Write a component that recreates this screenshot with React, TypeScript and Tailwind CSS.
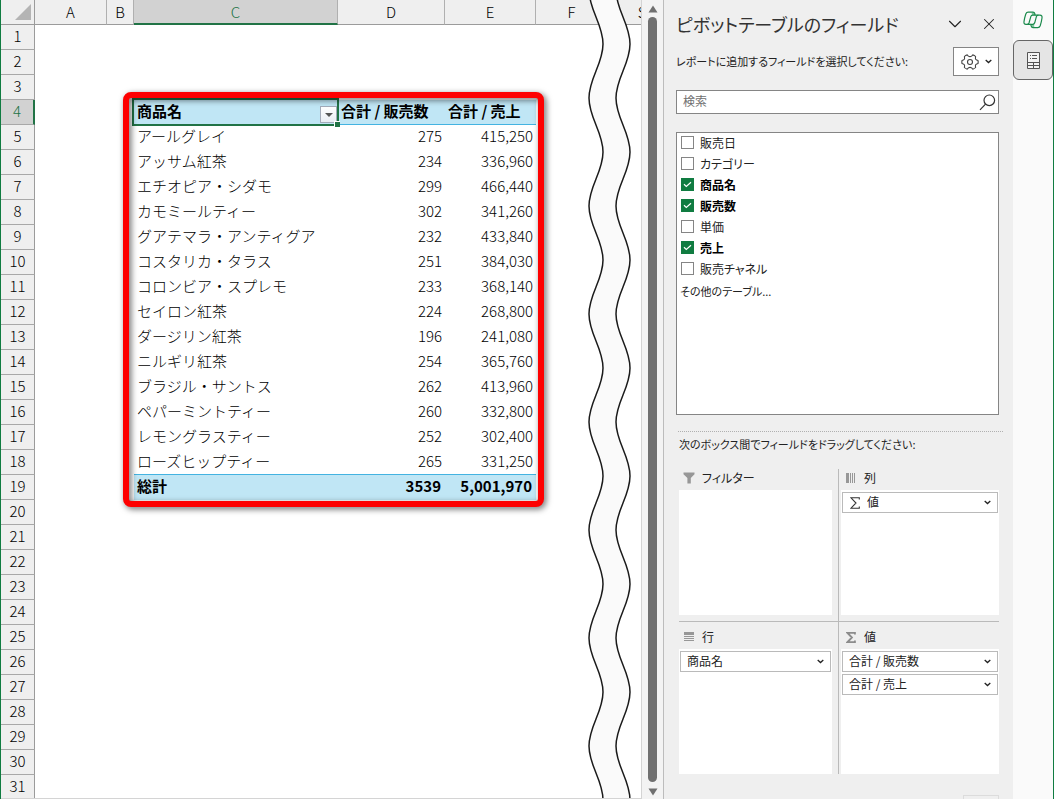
import React, { useState } from 'react';
import { ChevronDown, X } from 'lucide-react';

interface PivotRow {
    name: string;
    qty: string;
    sales: string;
}

const PIVOT_ROWS: PivotRow[] = [
    { name: 'アールグレイ', qty: '275', sales: '415,250' },
    { name: 'アッサム紅茶', qty: '234', sales: '336,960' },
    { name: 'エチオピア・シダモ', qty: '299', sales: '466,440' },
    { name: 'カモミールティー', qty: '302', sales: '341,260' },
    { name: 'グアテマラ・アンティグア', qty: '232', sales: '433,840' },
    { name: 'コスタリカ・タラス', qty: '251', sales: '384,030' },
    { name: 'コロンビア・スプレモ', qty: '233', sales: '368,140' },
    { name: 'セイロン紅茶', qty: '224', sales: '268,800' },
    { name: 'ダージリン紅茶', qty: '196', sales: '241,080' },
    { name: 'ニルギリ紅茶', qty: '254', sales: '365,760' },
    { name: 'ブラジル・サントス', qty: '262', sales: '413,960' },
    { name: 'ペパーミントティー', qty: '260', sales: '332,800' },
    { name: 'レモングラスティー', qty: '252', sales: '302,400' },
    { name: 'ローズヒップティー', qty: '265', sales: '331,250' },
];

const HEADER_ROW = 4;
const TOTAL_ROW = HEADER_ROW + PIVOT_ROWS.length + 1;
const ROW_NUMBERS = Array.from({ length: 31 }, (_, i) => i + 1);
const COLUMNS = ['A', 'B', 'C', 'D', 'E', 'F', 'S'];

const INITIAL_FIELDS = [
    { name: '販売日', checked: false },
    { name: 'カテゴリー', checked: false },
    { name: '商品名', checked: true },
    { name: '販売数', checked: true },
    { name: '単価', checked: false },
    { name: '売上', checked: true },
    { name: '販売チャネル', checked: false },
];

/* ---------- Icons ---------- */

const SmallChevron: React.FC<{ className?: string }> = ({ className }) => (
    <svg viewBox="0 0 7 5" className={`h-[5px] w-[7px] ${className ?? ''}`} fill="none" stroke="#222" strokeWidth="1.3">
        <path d="M0.7 0.9 L3.5 3.5 L6.3 0.9" />
    </svg>
);

const GearIcon = () => (
    <svg viewBox="0 0 18 18" className="h-[18px] w-[18px]" fill="none" stroke="#444" strokeWidth="1.1" strokeLinejoin="round">
        <path d="M6.2 1.9 Q4.5 2.3 3.4 3.5 L3.6 5.5 Q3.4 6.6 2.4 6.9 L1 7.5 Q0.6 9 1 10.5 L2.4 11.1 Q3.4 11.5 3.6 12.5 L3.4 14.5 Q4.5 15.7 6.2 16.1 L7.4 14.9 Q9 13.8 10.6 14.9 L11.8 16.1 Q13.5 15.7 14.6 14.5 L14.4 12.5 Q14.6 11.5 15.6 11.1 L17 10.5 Q17.4 9 17 7.5 L15.6 6.9 Q14.6 6.6 14.4 5.5 L14.6 3.5 Q13.5 2.3 11.8 1.9 L10.6 3.1 Q9 4.2 7.4 3.1 Z" />
        <circle cx="9" cy="9" r="2.5" />
    </svg>
);

const SearchIcon = () => (
    <svg viewBox="0 0 17 17" className="h-[17px] w-[17px]" fill="none" stroke="#333" strokeWidth="1.2">
        <circle cx="10.3" cy="6.3" r="5.3" />
        <path d="M6.5 10.2 L1 15.8" />
    </svg>
);

const FunnelIcon = () => (
    <svg viewBox="0 0 12 12" className="h-3 w-3" fill="#979797">
        <path d="M0.5 0.5 H11.5 V2.2 L7.8 6 V11.5 H4.4 V6 L0.5 2.2 Z" />
    </svg>
);

const ColumnsIcon = () => (
    <svg viewBox="0 0 10 10" className="h-[10px] w-[10px]" fill="#979797">
        <path d="M0 0h3v10h-3z M4 0h1v10h-1z M6 0h1v10h-1z M8 0h1v10h-1z" />
    </svg>
);

const RowsIcon = () => (
    <svg viewBox="0 0 10 10" className="h-[10px] w-[10px]" fill="#979797">
        <path d="M0 0h10v3h-10z M0 4h10v1h-10z M0 6h10v1h-10z M0 8h10v1h-10z" />
    </svg>
);

const SigmaIcon: React.FC<{ bold?: boolean }> = ({ bold }) => (
    <svg
        viewBox="0 0 10 12"
        className={bold ? 'h-[11px] w-[10px]' : 'h-3 w-[10px]'}
        fill="none"
        stroke={bold ? '#8c8c8c' : '#333'}
        strokeWidth={bold ? 2 : 1.1}
    >
        <path d="M9.3 2.6 V0.8 H1 L6 6 L1 11.2 H9.3 V9.4" />
    </svg>
);

const CopilotIcon = () => (
    <svg viewBox="0 0 20 18" className="h-[18px] w-5" fill="none" stroke="#1b8a4c" strokeWidth="1.2" strokeLinejoin="round">
        <path d="M8.6 1.6 H11 L12.2 4.2 H9 Z M8 13.3 H11 L11.4 16.4 H9.2 Z" fill="#7fc79d" stroke="none" />
        <path d="M5.2 1.2 H10 Q11.4 1.2 11.8 2.6 L12.2 4.2 H9.6 Q8.2 4.2 7.8 5.6 L6 12 Q5.6 13.3 4.2 13.3 H3 Q0.6 13.3 1 10.6 Q1.6 6.6 2.8 3 Q3.5 1.2 5.2 1.2 Z" />
        <path d="M14.8 16.6 H10 Q8.6 16.6 8.2 15.2 L7.7 13.3 H9.8 Q11.2 13.3 11.7 11.8 L13.4 5.6 Q13.8 4.2 15.4 4.2 H17 Q19.4 4.2 19 7 Q18.4 11.2 17.2 14.8 Q16.5 16.6 14.8 16.6 Z" />
        <path d="M12.2 4.2 H15.4 M4.2 13.3 H7.7" />
    </svg>
);

const FieldListIcon = () => (
    <svg viewBox="0 0 13 17" className="h-[17px] w-[13px]" fill="none" stroke="#555" strokeWidth="1">
        <path d="M0.5 0.5 H12.5 V16.5 H0.5 Z" fill="#f4f4f4" />
        <path d="M3 3.5 H4 M5 3.5 H10 M3 6.5 H4 M5 6.5 H10" />
        <path d="M0.5 10.5 H12.5 M0.5 13.5 H12.5 M6.5 10.5 V16.5" />
    </svg>
);

/* ---------- Worksheet ---------- */

const PivotCells: React.FC<{ row: number }> = ({ row }) => {
    if (row === HEADER_ROW) {
        return (
            <>
                <td className="relative border-b border-[#44b3e1] bg-[#c0e6f5] pl-[3px] align-top font-bold">
                    <div className="flex items-start justify-between">
                        商品名
                        <button
                            aria-label="商品名のフィルター"
                            className="mt-[6px] mr-px flex h-[17px] w-[17px] items-center justify-center border border-[#a3abb9] bg-linear-to-b from-white to-[#e9edf4]"
                        >
                            <svg viewBox="0 0 8 4" className="h-1 w-2" fill="#555">
                                <path d="M0 0 H8 L4 4 Z" />
                            </svg>
                        </button>
                    </div>
                    <div className="pointer-events-none absolute -inset-y-0.5 -right-px -left-0.5 border-2 border-[#217346]" />
                    <div className="absolute -right-0.5 -bottom-[3px] h-[6px] w-[6px] border-t border-l border-white bg-[#217346]" />
                </td>
                <td className="border-b border-[#44b3e1] bg-[#c0e6f5] pl-[3px] align-top font-bold">合計 / 販売数</td>
                <td className="border-b border-[#44b3e1] bg-[#c0e6f5] pl-[3px] align-top font-bold">合計 / 売上</td>
            </>
        );
    }
    if (row === TOTAL_ROW) {
        return (
            <>
                <td className="bg-[#c0e6f5] pl-[3px] align-top font-bold">総計</td>
                <td className="bg-[#c0e6f5] pr-1 text-right align-top font-bold">3539</td>
                <td className="bg-[#c0e6f5] pr-1 text-right align-top font-bold">5,001,970</td>
            </>
        );
    }
    const data = PIVOT_ROWS[row - HEADER_ROW - 1];
    if (!data) {
        return (
            <>
                <td />
                <td />
                <td />
            </>
        );
    }
    const line = row === TOTAL_ROW - 1 ? 'border-b border-[#44b3e1]' : '';
    return (
        <>
            <td className={`pl-[3px] align-top ${line}`}>{data.name}</td>
            <td className={`pr-[3px] text-right align-top ${line}`}>{data.qty}</td>
            <td className={`pr-[3px] text-right align-top ${line}`}>{data.sales}</td>
        </>
    );
};

const Worksheet = () => (
    <div className="relative min-w-0 flex-1 overflow-hidden border-r border-b border-[#d4d4d4] bg-white">
        <table className="w-[676px] table-fixed border-separate border-spacing-0 text-[15px] leading-[22px] font-light text-black">
            <colgroup>
                <col className="w-[34px]" />
                <col className="w-[72px]" />
                <col className="w-[27px]" />
                <col className="w-[204px]" />
                <col className="w-[107px]" />
                <col className="w-[91px]" />
                <col className="w-[72px]" />
                <col className="w-[69px]" />
            </colgroup>
            <thead>
                <tr className="h-[25px]">
                    <th className="border-r border-b border-[#9b9b9b] bg-[#efefef] p-0">
                        <svg viewBox="0 0 16 16" className="ml-auto mr-[3px] h-4 w-4" fill="#b4b4b4">
                            <path d="M16 0 V16 H0 Z" />
                        </svg>
                    </th>
                    {COLUMNS.map((col) => (
                        <th
                            key={col}
                            className={`border-r p-0 font-light ${
                                col === 'C'
                                    ? 'border-b-2 border-r-[#b0b0b0] border-b-[#217346] bg-[#d2d2d2] text-[#217346]'
                                    : 'border-b border-r-[#b0b0b0] border-b-[#9b9b9b] bg-[#efefef]'
                            }`}
                        >
                            {col}
                        </th>
                    ))}
                </tr>
            </thead>
            <tbody>
                {ROW_NUMBERS.map((row) => (
                    <tr key={row} className="h-[25px]">
                        <th
                            className={`border-b border-b-[#a8a8a8] p-0 pb-0.5 font-light ${
                                row === HEADER_ROW
                                    ? 'border-r-2 border-r-[#217346] bg-[#d2d2d2] text-[#217346]'
                                    : 'border-r border-r-[#9b9b9b] bg-[#efefef]'
                            }`}
                        >
                            {row}
                        </th>
                        <td />
                        <td />
                        <PivotCells row={row} />
                        <td />
                        <td />
                    </tr>
                ))}
            </tbody>
        </table>

        {/* Red frame round the pivot table */}
        <div className="pointer-events-none absolute top-[92px] left-[122px] h-[415px] w-[421px] rounded-lg border-6 border-[#fe0000] drop-shadow-[2px_2px_3px_rgba(0,0,0,0.6)]" />

        {/* Torn strip that hides the columns between F and S */}
        <svg viewBox="0 0 44 864" className="pointer-events-none absolute -top-[10px] left-[587px] h-[864px] w-11">
            <defs>
                <pattern id="wave" width="44" height="108" patternUnits="userSpaceOnUse">
                    <path
                        d="M1 0 C1 20 15 34 15 54 C15 74 1 88 1 108 H28 C28 88 42 74 42 54 C42 34 28 20 28 0 Z"
                        fill="#fafafa"
                    />
                    <path
                        d="M1 0 C1 20 15 34 15 54 C15 74 1 88 1 108 M28 0 C28 20 42 34 42 54 C42 74 28 88 28 108"
                        fill="none"
                        stroke="#1a1a1a"
                        strokeWidth="1.5"
                    />
                </pattern>
            </defs>
            <rect width="44" height="864" fill="url(#wave)" />
        </svg>
    </div>
);

const VerticalScrollbar = () => (
    <div className="flex w-[21px] shrink-0 flex-col items-center gap-1 bg-[#f3f3f3] pt-[5px] pb-[3px]">
        <button aria-label="上へスクロール">
            <svg viewBox="0 0 10 8" className="h-2 w-[10px]" fill="#707070">
                <path d="M5 0.5 L9.5 7.5 H0.5 Z" />
            </svg>
        </button>
        <div className="w-[9px] flex-1 rounded-full bg-[#707070]" />
        <button aria-label="下へスクロール" className="mt-0.5">
            <svg viewBox="0 0 10 8" className="h-2 w-[10px]" fill="#707070">
                <path d="M5 7.5 L9.5 0.5 H0.5 Z" />
            </svg>
        </button>
    </div>
);

/* ---------- Field pane ---------- */

const FieldSelect: React.FC<{ label: string; sigma?: boolean }> = ({ label, sigma }) => (
    <div className="relative">
        {sigma && (
            <span className="pointer-events-none absolute inset-y-0 left-2 flex items-center">
                <SigmaIcon />
            </span>
        )}
        <select
            aria-label={label}
            className={`block h-[21px] w-full appearance-none border border-[#bababa] bg-white pb-px text-xs text-[#222] ${sigma ? 'pl-6' : 'pl-[6px]'}`}
        >
            <option>{label}</option>
        </select>
        <SmallChevron className="pointer-events-none absolute top-2 right-[7px]" />
    </div>
);

interface AreaProps {
    title: string;
    icon: React.ReactNode;
    children?: React.ReactNode;
}

const Area: React.FC<AreaProps> = ({ title, icon, children }) => (
    <section>
        <h3 className="flex h-[21px] items-center gap-[7px] pb-[3px] pl-1 text-xs">
            <span className="flex w-3 justify-center">{icon}</span>
            {title}
        </h3>
        <div className="flex h-[125px] flex-col gap-0.5 bg-white px-px pt-0.5">{children}</div>
    </section>
);

const FieldPane = () => {
    const [fields, setFields] = useState(INITIAL_FIELDS);

    const toggleField = (name: string) => {
        setFields(fields.map((f) => (f.name === name ? { ...f, checked: !f.checked } : f)));
    };

    return (
        <aside className="flex w-[350px] shrink-0 flex-col border-l border-[#bcbcbc] bg-[#efefef] pr-[14px] pl-3 text-xs text-[#222] [font-feature-settings:'palt']">
            <div className="flex h-[47px] items-center justify-between">
                <h2 className="text-lg text-[#333]">ピボットテーブルのフィールド</h2>
                <div className="flex items-center gap-[14px] pr-px">
                    <button aria-label="作業ウィンドウのオプション">
                        <ChevronDown size={22} strokeWidth={1.2} />
                    </button>
                    <button aria-label="閉じる">
                        <X size={18} strokeWidth={1.4} />
                    </button>
                </div>
            </div>

            <div className="flex items-center justify-between">
                <p className="text-[11px]">レポートに追加するフィールドを選択してください:</p>
                <button aria-label="ツール" className="flex h-[29px] w-[46px] items-center justify-center gap-[6px] border border-[#858585] bg-white">
                    <GearIcon />
                    <SmallChevron />
                </button>
            </div>

            <div className="mt-[14px] flex h-6 shrink-0 items-center border border-[#858585] bg-white pr-0.5 pl-[6px]">
                <input type="text" aria-label="検索" placeholder="検索" className="min-w-0 flex-1 pb-0.5 outline-none placeholder:text-[#707070]" />
                <button aria-label="検索を実行">
                    <SearchIcon />
                </button>
            </div>

            <div className="mt-[18px] min-h-0 flex-1 overflow-hidden border border-[#858585] bg-white">
                {fields.map((field) => (
                    <label
                        key={field.name}
                        className={`flex h-[21px] items-center gap-[6px] pb-0.5 pl-1 ${field.checked ? 'font-bold text-black' : ''}`}
                    >
                        <span className="relative flex">
                            <input
                                type="checkbox"
                                checked={field.checked}
                                onChange={() => toggleField(field.name)}
                                className="h-[13px] w-[13px] appearance-none border border-[#858585] bg-white checked:border-[#107c41] checked:bg-[#107c41]"
                            />
                            {field.checked && (
                                <svg viewBox="0 0 13 13" className="pointer-events-none absolute inset-0" fill="none" stroke="#fff" strokeWidth="1.2">
                                    <path d="M3 6.3 L5.3 8.5 L10 4.2" />
                                </svg>
                            )}
                        </span>
                        {field.name}
                    </label>
                ))}
                <a href="#tables" className="block pl-[3px] text-[11px] leading-[22px]">
                    その他のテーブル...
                </a>
            </div>

            <div className="mt-4 -mr-1 ml-0.5 border-t border-dotted border-[#b0b0b0]" />
            <p className="pl-[3px] text-[11px] leading-6">次のボックス間でフィールドをドラッグしてください:</p>

            <div className="mt-[13px] ml-[3px] grid grid-cols-[153px_1fr]">
                <div className="pb-[6px]">
                    <Area title="フィルター" icon={<FunnelIcon />} />
                </div>
                <div className="ml-[6px] border-l border-[#bababa] pb-[6px] pl-0.5">
                    <Area title="列" icon={<ColumnsIcon />}>
                        <FieldSelect label="値" sigma />
                    </Area>
                </div>
                <div className="-mr-[6px] border-t border-[#bababa] pt-[6px] pr-[6px]">
                    <Area title="行" icon={<RowsIcon />}>
                        <FieldSelect label="商品名" />
                    </Area>
                </div>
                <div className="ml-[6px] border-t border-l border-[#bababa] pt-[6px] pl-0.5">
                    <Area title="値" icon={<SigmaIcon bold />}>
                        <FieldSelect label="合計 / 販売数" />
                        <FieldSelect label="合計 / 売上" />
                    </Area>
                </div>
            </div>

            <div className="mt-[21px] h-1 w-9 shrink-0 self-end border-x border-t border-[#dcdcdc]" />
        </aside>
    );
};

const SideRail = () => (
    <nav className="flex w-10 shrink-0 flex-col items-center bg-[#fafafa] pt-[11px]">
        <button aria-label="Copilot" className="flex h-[18px] w-full items-center justify-center">
            <CopilotIcon />
        </button>
        <button aria-label="フィールド リスト" className="mt-[11px] flex h-10 w-10 items-center justify-center rounded-md border border-[#666] bg-[#e5e5e5]">
            <FieldListIcon />
        </button>
    </nav>
);

const App: React.FC = () => {
    return (
        <div className="flex h-screen overflow-hidden bg-white pr-px font-['Noto_Sans_CJK_JP',sans-serif]">
            <div className="flex min-w-0 flex-1 border-x border-[#107c41]">
                <Worksheet />
                <VerticalScrollbar />
                <FieldPane />
                <SideRail />
            </div>
        </div>
    );
};

export default App;
